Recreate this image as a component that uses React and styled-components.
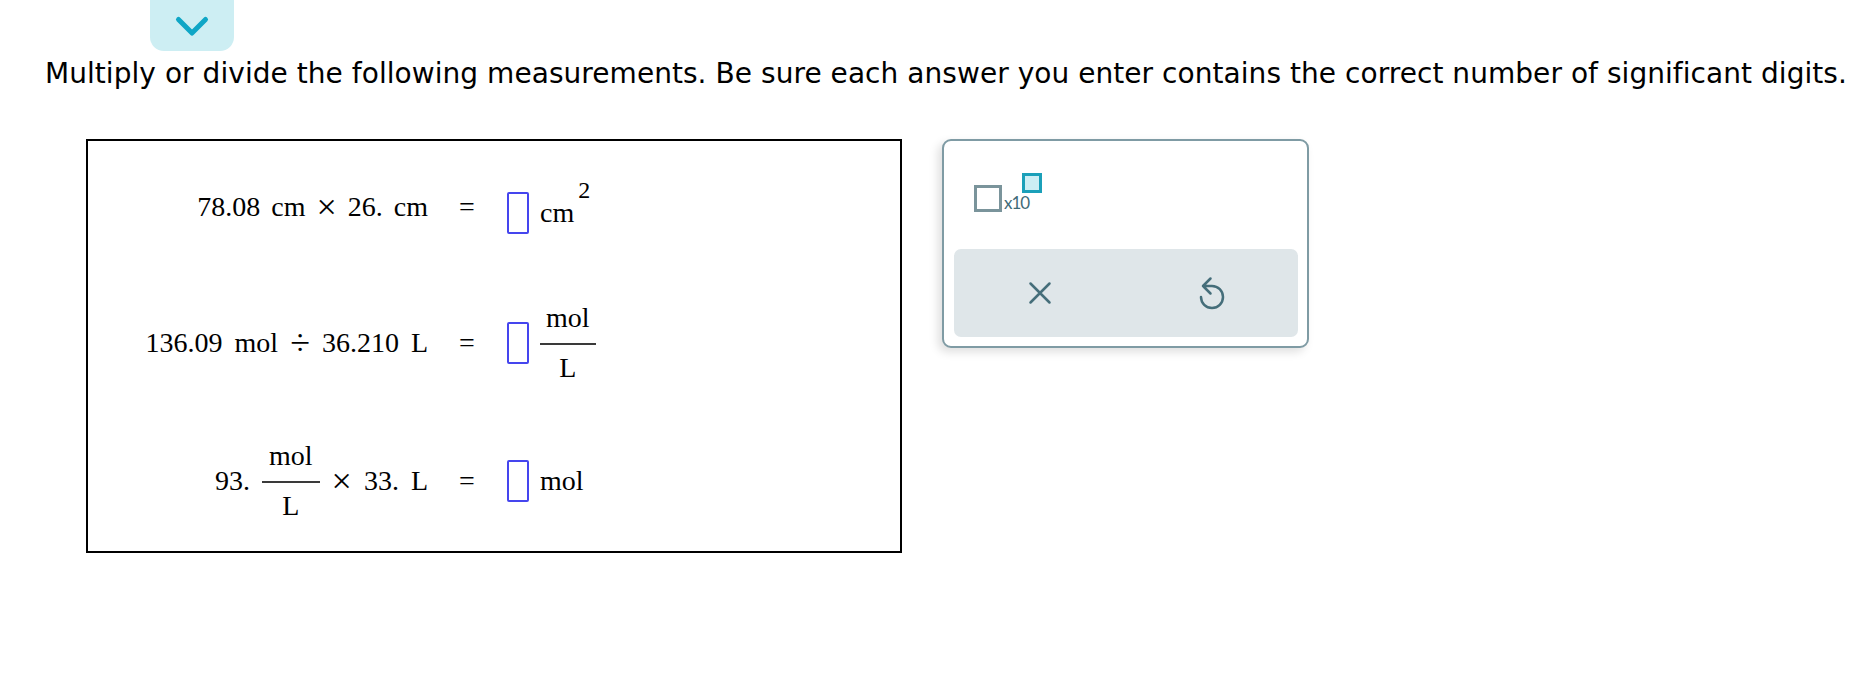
import styled, { createGlobalStyle } from "styled-components"

const GlobalStyle = createGlobalStyle`
  html, body {
    margin: 0;
    padding: 0;
    background: #fff;
  }
  body {
    font-family: "DejaVu Sans", Verdana, sans-serif;
  }
`

const getRows = () => [
  {
    h: 132,
    dy: 6,
    gap: 11,
    left: (
      <>
        <Tok>78.08</Tok>
        <Tok>cm</Tok>
        <Op>×</Op>
        <Tok>26.</Tok>
        <Tok>cm</Tok>
      </>
    ),
    unit: (
      <Unit>
        <Tok>cm</Tok>
        <Sup>2</Sup>
      </Unit>
    ),
  },
  {
    h: 140,
    left: (
      <>
        <Tok>136.09</Tok>
        <Tok>mol</Tok>
        <Op>÷</Op>
        <Tok>36.210</Tok>
        <Tok>L</Tok>
      </>
    ),
    unit: <Frac num="mol" den="L" />,
  },
  {
    h: 136,
    left: (
      <>
        <Tok>93.</Tok>
        <Frac num="mol" den="L" wide />
        <Op>×</Op>
        <Tok>33.</Tok>
        <Tok>L</Tok>
      </>
    ),
    unit: <Tok>mol</Tok>,
  },
]

function Frac({ num, den, wide }) {
  return (
    <FracWrap>
      <Num $wide={wide}>{num}</Num>
      <Den>{den}</Den>
    </FracWrap>
  )
}

const App = () => {
  const rows = getRows()
  return (
    <Page>
      <GlobalStyle />
      <Tab aria-label="collapse">
        <svg width="36" height="24" viewBox="0 0 36 24">
          <path d="M4.5 5.5 L18 19 L31.5 5.5" fill="none" stroke="#0fa6c6" strokeWidth="5" strokeLinecap="round" strokeLinejoin="round" />
        </svg>
      </Tab>
      <Prompt>
        Multiply or divide the following measurements. Be sure each answer you enter contains the correct number of significant digits.
      </Prompt>
      <Workspace>
        <ProblemBox>
          {rows.map((r, i) => (
            <Row key={i} $h={r.h}>
              <Expr $gap={r.gap}>{r.left}</Expr>
              <Eq>=</Eq>
              <Answer $dy={r.dy}>
                <InputBox />
                {r.unit}
              </Answer>
            </Row>
          ))}
        </ProblemBox>
        <Panel>
          <Template>
            <BaseBox />
            <TimesTen>x10</TimesTen>
            <ExpBox />
          </Template>
          <Actions>
            <ActionBtn aria-label="clear">
              <svg width="24" height="24" viewBox="0 0 24 24">
                <path d="M2.5 2.5 L21.5 21.5 M21.5 2.5 L2.5 21.5" fill="none" stroke="#456e7a" strokeWidth="2.5" strokeLinecap="round" />
              </svg>
            </ActionBtn>
            <ActionBtn aria-label="undo">
              <svg width="28" height="36" viewBox="0 0 28 36">
                <path d="M5 11 H14 A11 11 0 1 1 3 22 M12.5 3.5 L5 11 L12.5 18.5" fill="none" stroke="#456e7a" strokeWidth="2.5" strokeLinecap="round" strokeLinejoin="round" />
              </svg>
            </ActionBtn>
          </Actions>
        </Panel>
      </Workspace>
    </Page>
  )
}

export default App

const Page = styled.div`
  width: 1860px;
  height: 688px;
  overflow: hidden;
`
const Tab = styled.button`
  display: grid;
  place-items: center;
  margin-left: 150px;
  width: 84px;
  height: 51px;
  padding: 0;
  border: 0;
  background: #cdeef3;
  border-radius: 0 0 14px 14px;
`
const Prompt = styled.p`
  margin: 7px 0 0 45px;
  font-size: 28px;
  line-height: 32px;
  letter-spacing: 0.05px;
  color: #000;
  white-space: nowrap;
`
const Workspace = styled.div`
  display: flex;
  align-items: flex-start;
  gap: 40px;
  margin: 49px 0 0 86px;
`
const ProblemBox = styled.div`
  width: 816px;
  height: 414px;
  box-sizing: border-box;
  border: 2px solid #000;
  font-family: "Liberation Serif", "Times New Roman", serif;
  font-size: 28px;
  color: #000;
`
const Row = styled.div`
  display: flex;
  align-items: center;
  height: ${p => p.$h}px;
`
const Expr = styled.div`
  width: 340px;
  display: flex;
  justify-content: flex-end;
  align-items: center;
  gap: ${p => p.$gap || 12}px;
`
const Tok = styled.span`
  line-height: 1;
  white-space: nowrap;
`
const Op = styled.span`
  font-size: 36px;
  line-height: 1;
`
const Eq = styled.span`
  width: 78px;
  text-align: center;
  line-height: 1;
`
const Answer = styled.div`
  display: flex;
  align-items: center;
  gap: 11px;
  transform: translateY(${p => p.$dy || 0}px);
`
const InputBox = styled.span`
  width: 22px;
  height: 42px;
  margin-left: 1px;
  box-sizing: border-box;
  border: 2px solid #4545ee;
  border-radius: 2px;
`
const Unit = styled.span`
  display: flex;
  align-items: center;
  gap: 4px;
`
const Sup = styled.span`
  font-size: 24px;
  line-height: 1;
  transform: translateY(-23px);
`
const FracWrap = styled.span`
  display: inline-flex;
  flex-direction: column;
  align-items: center;
  line-height: 1;
`
const Num = styled.span`
  padding: 0 ${p => (p.$wide ? 7 : 6)}px 11px;
  border-bottom: 2px solid #3a3a3a;
`
const Den = styled.span`
  padding-top: 9px;
`
const Panel = styled.div`
  width: 367px;
  height: 209px;
  box-sizing: border-box;
  border: 2px solid #7f9ba4;
  border-radius: 9px;
  padding: 10px 9px 9px 10px;
  background: #fff;
  box-shadow: -4px 4px 10px rgba(0, 0, 0, 0.13);
  display: flex;
  flex-direction: column;
  justify-content: space-between;
`
const Template = styled.div`
  display: flex;
  align-items: flex-start;
  margin: 22px 0 0 20px;
`
const BaseBox = styled.span`
  width: 28px;
  height: 27px;
  margin-top: 12px;
  box-sizing: border-box;
  border: 3px solid #7a949b;
`
const TimesTen = styled.span`
  margin: 21px 0 0 2px;
  font-family: Lato, "Open Sans", sans-serif;
  font-size: 17px;
  line-height: 17px;
  letter-spacing: -1px;
  color: #3f6b78;
`
const ExpBox = styled.span`
  width: 20px;
  height: 20px;
  margin-left: -7px;
  box-sizing: border-box;
  border: 3px solid #1ba0b9;
  background: #cdeef4;
`
const Actions = styled.div`
  display: grid;
  grid-template-columns: 1fr 1fr;
  height: 88px;
  border-radius: 7px;
  background: #dfe6e9;
`
const ActionBtn = styled.button`
  display: grid;
  place-items: center;
  padding: 0;
  border: 0;
  background: transparent;
`
